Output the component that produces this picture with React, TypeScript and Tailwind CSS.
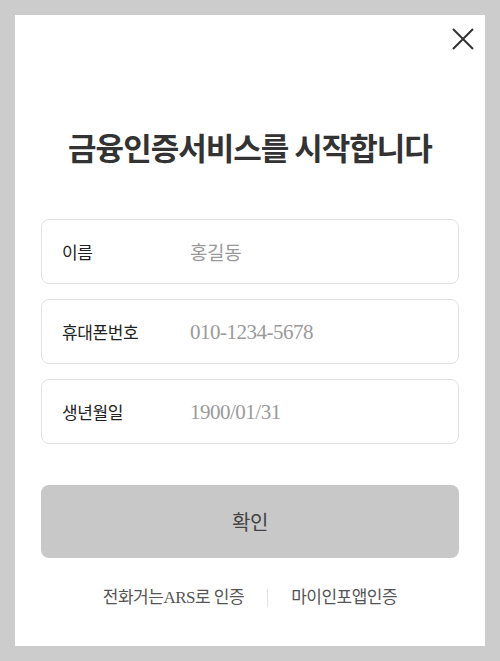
import React from 'react';

const fields = [
  { label: '이름', placeholder: '홍길동', hangul: true },
  { label: '휴대폰번호', placeholder: '010-1234-5678', hangul: false },
  { label: '생년월일', placeholder: '1900/01/31', hangul: false },
];

function CloseIcon() {
  return (
    <svg width="22" height="22" viewBox="0 0 22 22" fill="none">
      <path d="M1 1L21 21M21 1L1 21" stroke="#333333" strokeWidth="2" />
    </svg>
  );
}

export default function App() {
  return (
    <div className="h-[661px] w-full bg-[#cccccc] p-[15px] font-['Noto_Sans_CJK_KR',sans-serif]">
      <div className="flex h-full flex-col bg-white px-[26px]">
        <div className="flex justify-end pt-[13px]">
          <button type="button" className="-mr-[15px] h-[22px] w-[22px]" aria-label="닫기">
            <CloseIcon />
          </button>
        </div>

        <h1 className="mt-[77px] text-center text-[31px] font-bold leading-[40px] tracking-[-1px] text-[#333333]">
          금융인증서비스를 시작합니다
        </h1>

        <div className="mt-[52px] flex flex-col gap-[15px]">
          {fields.map((f) => (
            <label
              key={f.label}
              className="flex h-[65px] items-center rounded-[8px] border border-[#e2e2e2] px-[20px]"
            >
              <span className="w-[128px] shrink-0 text-[17px] leading-[24px] tracking-[-0.4px] text-[#222222]">
                {f.label}
              </span>
              <input
                type="text"
                placeholder={f.placeholder}
                className={
                  f.hangul
                    ? "w-full bg-transparent text-[19px] leading-[28px] tracking-[-0.4px] text-[#333] outline-none placeholder:text-[#9a9a9a]"
                    : "w-full bg-transparent font-['Liberation_Serif','Noto_Sans_CJK_KR',serif] text-[21px] leading-[28px] tracking-[-0.5px] text-[#333] outline-none placeholder:text-[#9a9a9a]"
                }
              />
            </label>
          ))}
        </div>

        <button
          type="button"
          className="mt-[41px] h-[73px] w-full rounded-[8px] bg-[#c8c8c8] text-[20px] leading-[28px] tracking-[-0.3px] text-[#444444]"
        >
          확인
        </button>

        <div className="mt-[28px] flex items-center justify-center gap-[23px] font-['Liberation_Serif','Noto_Sans_CJK_KR',serif] text-[17px] leading-[24px] tracking-[-0.5px] text-[#555555]">
          <a href="#">전화거는ARS로 인증</a>
          <span className="h-[18px] w-px bg-[#e2e2e2]" />
          <a href="#">마이인포앱인증</a>
        </div>
      </div>
    </div>
  );
}
